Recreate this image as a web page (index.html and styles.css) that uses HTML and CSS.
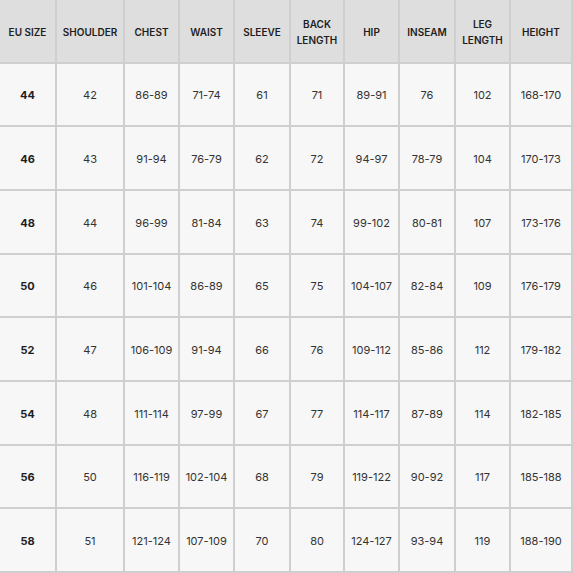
FILE: index.html
```html
<!DOCTYPE html>
<html lang="en">
<head>
<meta charset="utf-8">
<title>Size Chart</title>
<link rel="stylesheet" href="styles.css">
</head>
<body>
<div class="chart">
  <div class="cell head">EU SIZE</div>
  <div class="cell head">SHOULDER</div>
  <div class="cell head">CHEST</div>
  <div class="cell head">WAIST</div>
  <div class="cell head">SLEEVE</div>
  <div class="cell head">BACK<br>LENGTH</div>
  <div class="cell head">HIP</div>
  <div class="cell head">INSEAM</div>
  <div class="cell head">LEG<br>LENGTH</div>
  <div class="cell head">HEIGHT</div>

  <div class="cell size">44</div><div class="cell">42</div><div class="cell">86-89</div><div class="cell">71-74</div><div class="cell">61</div><div class="cell">71</div><div class="cell">89-91</div><div class="cell">76</div><div class="cell">102</div><div class="cell">168-170</div>
  <div class="cell size">46</div><div class="cell">43</div><div class="cell">91-94</div><div class="cell">76-79</div><div class="cell">62</div><div class="cell">72</div><div class="cell">94-97</div><div class="cell">78-79</div><div class="cell">104</div><div class="cell">170-173</div>
  <div class="cell size">48</div><div class="cell">44</div><div class="cell">96-99</div><div class="cell">81-84</div><div class="cell">63</div><div class="cell">74</div><div class="cell">99-102</div><div class="cell">80-81</div><div class="cell">107</div><div class="cell">173-176</div>
  <div class="cell size">50</div><div class="cell">46</div><div class="cell">101-104</div><div class="cell">86-89</div><div class="cell">65</div><div class="cell">75</div><div class="cell">104-107</div><div class="cell">82-84</div><div class="cell">109</div><div class="cell">176-179</div>
  <div class="cell size">52</div><div class="cell">47</div><div class="cell">106-109</div><div class="cell">91-94</div><div class="cell">66</div><div class="cell">76</div><div class="cell">109-112</div><div class="cell">85-86</div><div class="cell">112</div><div class="cell">179-182</div>
  <div class="cell size">54</div><div class="cell">48</div><div class="cell">111-114</div><div class="cell">97-99</div><div class="cell">67</div><div class="cell">77</div><div class="cell">114-117</div><div class="cell">87-89</div><div class="cell">114</div><div class="cell">182-185</div>
  <div class="cell size">56</div><div class="cell">50</div><div class="cell">116-119</div><div class="cell">102-104</div><div class="cell">68</div><div class="cell">79</div><div class="cell">119-122</div><div class="cell">90-92</div><div class="cell">117</div><div class="cell">185-188</div>
  <div class="cell size">58</div><div class="cell">51</div><div class="cell">121-124</div><div class="cell">107-109</div><div class="cell">70</div><div class="cell">80</div><div class="cell">124-127</div><div class="cell">93-94</div><div class="cell">119</div><div class="cell">188-190</div>
</div>
</body>
</html>
```

FILE: styles.css
```css
html, body {
  margin: 0;
  padding: 0;
  background: #ffffff;
}

.chart {
  display: grid;
  grid-template-columns: 57px 68px 55px 55px 56px 54px 55px 56px 55px 62px;
  grid-template-rows: repeat(9, 1fr);
  width: 573px;
  height: 573px;
  font-family: "Inter", "Liberation Sans", sans-serif;
  background: #f7f7f7;
}

.cell {
  box-sizing: border-box;
  display: flex;
  align-items: center;
  justify-content: center;
  text-align: center;
  border-right: 2px solid #cfcfcf;
  border-bottom: 2px solid #cfcfcf;
  font-size: 11px;
  color: #333333;
  background: #f7f7f7;
  padding-top: 2px;
}

.head {
  background: #dedede;
  color: #1e1e1e;
  font-weight: 600;
  font-size: 10px;
  line-height: 16px;
}

.size {
  font-weight: 700;
  color: #1e1e1e;
}
```
